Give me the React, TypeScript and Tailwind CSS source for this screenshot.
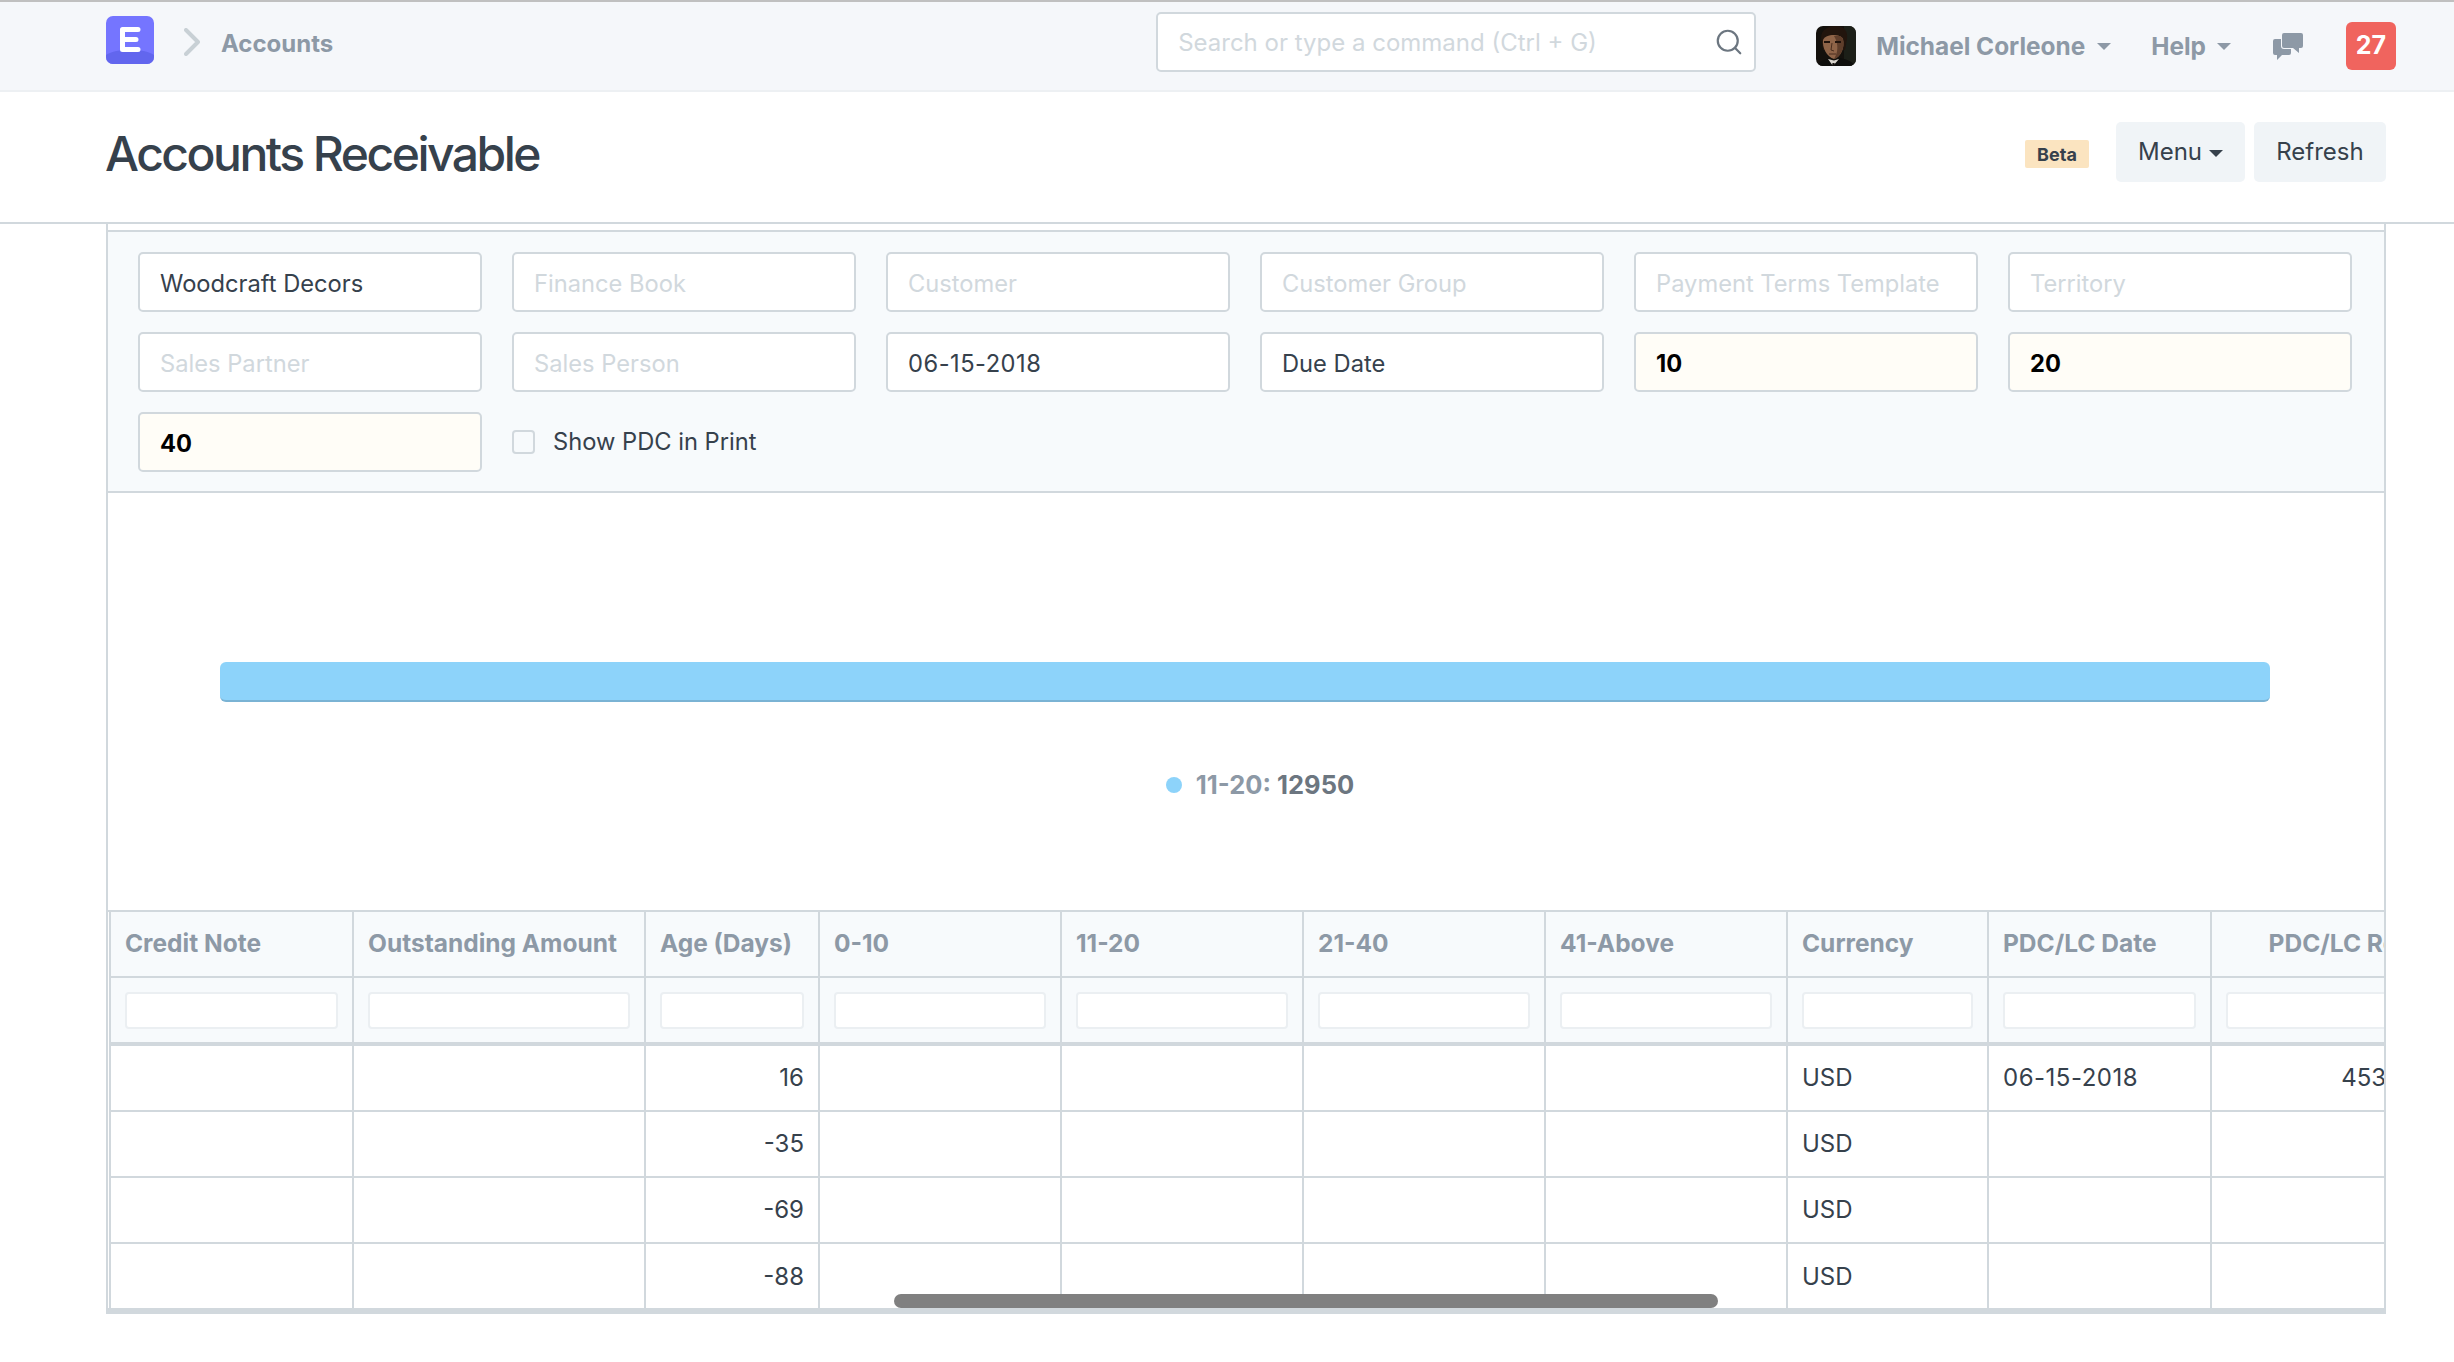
import { Search } from "lucide-react";

const font = { fontFamily: "Inter, sans-serif" };

const filtersRow1 = [
  { text: "Woodcraft Decors", value: true },
  { text: "Finance Book" },
  { text: "Customer" },
  { text: "Customer Group" },
  { text: "Payment Terms Template" },
  { text: "Territory" },
];

const filtersRow2 = [
  { text: "Sales Partner" },
  { text: "Sales Person" },
  { text: "06-15-2018", value: true, date: true },
  { text: "Due Date", value: true },
  { text: "10", bold: true },
  { text: "20", bold: true },
];

const columns = [
  { label: "Credit Note", width: "w-[243px]" },
  { label: "Outstanding Amount", width: "w-[292px]" },
  { label: "Age (Days)", width: "w-[174px]" },
  { label: "0-10", width: "w-[242px]" },
  { label: "11-20", width: "w-[242px]" },
  { label: "21-40", width: "w-[242px]" },
  { label: "41-Above", width: "w-[242px]" },
  { label: "Currency", width: "w-[201px]" },
  { label: "PDC/LC Date", width: "w-[223px]" },
  { label: "PDC/LC Ref", width: "w-[211px]", right: true },
];

const rows = [
  ["", "", "16", "", "", "", "", "USD", "06-15-2018", "453.0"],
  ["", "", "-35", "", "", "", "", "USD", "", ""],
  ["", "", "-69", "", "", "", "", "USD", "", ""],
  ["", "", "-88", "", "", "", "", "USD", "", ""],
];

const rightAligned = [2, 9];

function Caret({ className }: { className: string }) {
  return <span className={`inline-block w-0 h-0 border-x-[7px] border-x-transparent border-t-[7px] ${className}`} />;
}

function Logo() {
  return (
    <svg width="48" height="48" viewBox="0 0 48 48" className="shrink-0 mb-[12px]">
      <rect width="48" height="48" rx="7" fill="#7575ff" />
      <path d="M0 39 C10 32 38 32 48 39 V41 a7 7 0 0 1 -7 7 H7 a7 7 0 0 1 -7 -7 Z" fill="#6266ee" />
      <path d="M16.5 13.5 H32 M16.5 23.5 H30 M16.5 33.5 H32 M16.5 13.5 V33.5" stroke="#fff" strokeWidth="5" strokeLinecap="round" fill="none" />
    </svg>
  );
}

function Avatar() {
  return (
    <svg width="40" height="40" viewBox="0 0 40 40" className="shrink-0 rounded-[7px]">
      <rect width="40" height="40" fill="#14110d" />
      <rect x="28" width="12" height="40" fill="#1c1f18" />
      <path d="M5 12 C5 3 13 0 20 0 C28 0 32 5 31 13 L29 24 L7 24 Z" fill="#22150d" />
      <path d="M7 14 C9 8 24 7 27 13 C29 21 25 31 18 33 C11 31 6 22 7 14 Z" fill="#8f6448" />
      <path d="M18 10 C24 9 27 11 27 14 C29 21 25 31 18 33 C22 27 23 18 18 10 Z" fill="#5f3e2b" />
      <path d="M8 16 H14 M19 16 H25" stroke="#21130c" strokeWidth="1.8" />
      <path d="M16 17 L15 24 L18 25 M13 28 H20" stroke="#4a2d1e" strokeWidth="1" fill="none" />
      <path d="M1 40 C3 35 8 34 12 33 L17 38 L24 32 C30 33 36 35 39 40 Z" fill="#0e0e0c" />
      <path d="M12 33 L17 40 L23 33 L18 34.5 Z" fill="#d8d4cc" />
      <path d="M16.5 37 L18.5 37 L19 40 L16 40 Z" fill="#15120f" />
    </svg>
  );
}

function ChatIcon() {
  return (
    <svg width="31" height="27" viewBox="0 0 31 27" className="shrink-0">
      <path d="M2 6 H16 a2 2 0 0 1 2 2 V20 a2 2 0 0 1 -2 2 H9 L4 27 V22 H2 a2 2 0 0 1 -2 -2 V8 a2 2 0 0 1 2 -2 Z" fill="#8d99a6" />
      <path d="M11 0 H28 a2 2 0 0 1 2 2 V13 a2 2 0 0 1 -2 2 H26 V20 L20 15 H11 a2 2 0 0 1 -2 -2 V2 a2 2 0 0 1 2 -2 Z" fill="#8d99a6" stroke="#f5f7fa" strokeWidth="2" paintOrder="stroke" />
    </svg>
  );
}

function Field({ text, value, bold, date }: { text: string; value?: boolean; bold?: boolean; date?: boolean }) {
  return (
    <div
      className={`h-[60px] flex items-center px-[20px] pt-[3px] border-2 border-[#d1d8dd] rounded-[5px] text-[23.7px] ${
        date ? "tracking-[0.5px]" : ""
      } ${bold ? "bg-[#fffdf7] font-bold text-black" : value ? "bg-white text-[#36414c]" : "bg-white text-[#d1d8dd]"}`}
    >
      {text}
    </div>
  );
}

export default function App() {
  return (
    <div style={font} className="w-[2454px] h-[1362px] bg-white overflow-hidden flex flex-col">
      <nav className="h-[92px] shrink-0 bg-[#f5f7fa] border-t-2 border-t-[#c0c0c0] border-b-2 border-b-[#edf0f3] flex items-center pl-[106px] pr-[58px]">
        <Logo />
        <svg width="16" height="28" viewBox="0 0 16 28" className="ml-[30px] mb-[8px] shrink-0">
          <path d="M2 2 L14 14 L2 26" stroke="#c8d0d5" strokeWidth="4" strokeLinecap="round" strokeLinejoin="round" fill="none" />
        </svg>
        <span className="ml-[21px] mb-[4px] text-[24px] font-bold text-[#8d99a6]">Accounts</span>

        <div className="ml-auto mb-[8px] w-[600px] h-[60px] bg-white border-2 border-[#d1d8dd] rounded-[5px] flex items-center justify-between pl-[20px] pr-[10px]">
          <span className="pt-[2px] text-[24px] text-[#d1d8dd]">Search or type a command (Ctrl + G)</span>
          <Search size={30} strokeWidth={1.75} className="text-[#6c7680]" />
        </div>
        <div className="ml-[60px] flex items-center">
          <Avatar />
          <span className="ml-[20px] text-[24.4px] font-bold text-[#8d99a6]">Michael Corleone</span>
          <Caret className="ml-[12px] border-t-[#8d99a6]" />
          <span className="ml-[40px] text-[24.4px] font-bold text-[#8d99a6]">Help</span>
          <Caret className="ml-[11px] border-t-[#8d99a6]" />
        </div>
        <div className="ml-[42px]">
          <ChatIcon />
        </div>
        <div className="ml-[42px] w-[50px] h-[48px] rounded-[6px] bg-[#f0645e] text-white font-bold text-[25px] flex items-center justify-center">
          27
        </div>
      </nav>

      <header className="h-[132px] shrink-0 border-b-2 border-[#d1d8dd] flex items-center pl-[105px] pr-[68px]">
        <h1 className="mb-[6px] text-[48px] font-medium text-[#36414c] tracking-[-2.5px]">Accounts Receivable</h1>
        <div className="ml-auto mb-[10px] flex items-center">
          <span className="mt-[4px] w-[64px] h-[28px] bg-[#fbe4c0] rounded-[2px] text-[18px] font-bold text-[#36414c] flex items-center justify-center">
            Beta
          </span>
          <button className="ml-[27px] w-[129px] h-[60px] rounded-[5px] bg-[#f0f4f7] text-[24px] text-[#36414c] flex items-center justify-center gap-[7px]">
            Menu
            <Caret className="border-t-[#36414c] mt-[2px]" />
          </button>
          <button className="ml-[9px] w-[132px] h-[60px] rounded-[5px] bg-[#f0f4f7] text-[24px] text-[#36414c]">Refresh</button>
        </div>
      </header>

      <main className="ml-[106px] w-[2280px] border-x-2 border-[#d1d8dd] flex flex-col">
        <section className="mt-[6px] h-[263px] shrink-0 bg-[#f7fafc] border-y-2 border-[#d1d8dd] px-[30px] pt-[20px]">
          <div className="grid grid-cols-6 gap-x-[30px] gap-y-[20px] w-[2214px]">
            {filtersRow1.map((f) => (
              <Field key={f.text} {...f} />
            ))}
            {filtersRow2.map((f) => (
              <Field key={f.text} {...f} />
            ))}
            <Field text="40" bold />
            <label className="flex items-center text-[23.7px] text-[#36414c]">
              <span className="w-[23px] h-[24px] bg-[#f7fafc] border-2 border-[#d1d8dd] rounded-[4px] mr-[18px]" />
              Show PDC in Print
            </label>
          </div>
        </section>

        <section className="h-[417px] shrink-0 px-[112px] pt-[169px]">
          <div className="h-[40px] w-[2050px] bg-[#8dd3fa] border-b-2 border-b-[#7ab3d4] rounded-[6px]" />
          <div className="mt-[64px] flex items-center justify-center pl-[28px] text-[25.5px] font-bold">
            <span className="w-[16px] h-[16px] rounded-full bg-[#8dd3fa] mr-[14px]" />
            <span className="text-[#8d99a6]">11-20:</span>
            <span className="ml-[6px] text-[#6c7680]">12950</span>
          </div>
        </section>

        <section className="relative h-[404px] shrink-0 border-t-2 border-b-[6px] border-[#d1d8dd] overflow-hidden pl-[1px]">
          <div className="w-[2600px] border-l-2 border-[#d1d8dd]">
            <div className="flex h-[66px] bg-[#f7fafc] border-b-2 border-[#d1d8dd]">
              {columns.map((c) => (
                <div
                  key={c.label}
                  className={`${c.width} shrink-0 border-r-2 border-[#d1d8dd] px-[14px] pb-[2px] flex items-center text-[24.5px] font-bold text-[#8d99a6] whitespace-nowrap ${
                    c.right ? "justify-end" : ""
                  }`}
                >
                  {c.label}
                </div>
              ))}
            </div>
            <div className="flex h-[68px] bg-[#f7fafc] border-b-[4px] border-[#d1d8dd]">
              {columns.map((c) => (
                <div key={c.label} className={`${c.width} shrink-0 border-r-2 border-[#d1d8dd] px-[14px] flex items-center`}>
                  <div className="w-full h-[37px] bg-white border-2 border-[#ebeff2] rounded-[4px]" />
                </div>
              ))}
            </div>
            {rows.map((row, i) => (
              <div key={i} className="flex h-[66px] border-b-2 border-[#d1d8dd] last:border-b-0">
                {row.map((cell, j) => (
                  <div
                    key={j}
                    className={`${columns[j].width} shrink-0 border-r-2 border-[#d1d8dd] px-[14px] flex items-center text-[24px] text-[#36414c] ${
                      rightAligned.includes(j) ? "justify-end" : ""
                    } ${j === 8 ? "tracking-[0.5px]" : ""}`}
                  >
                    {cell}
                  </div>
                ))}
              </div>
            ))}
          </div>
          <div className="absolute left-[786px] bottom-0 w-[824px] h-[14px] rounded-full bg-[#808080]" />
        </section>
      </main>
    </div>
  );
}
